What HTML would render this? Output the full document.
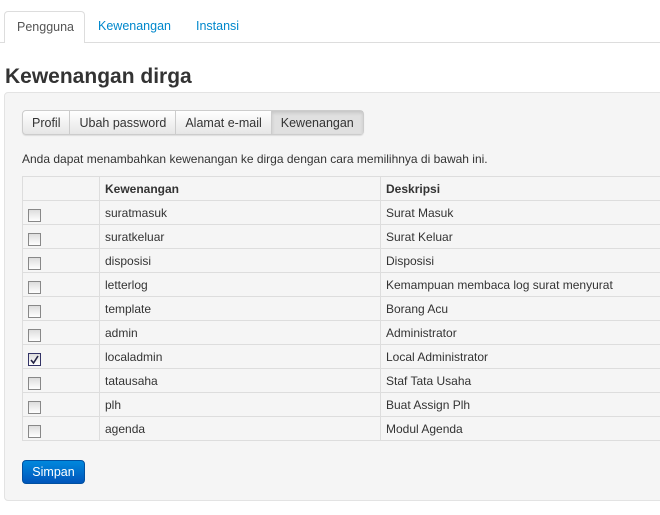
<!DOCTYPE html>
<html><head><meta charset="utf-8"><style>
*{box-sizing:border-box}
body{margin:0;width:660px;height:515px;overflow:hidden;background:#fff;font-family:"Liberation Sans",Arial,sans-serif;font-size:12px;color:#333}
.nav{position:absolute;left:0;top:0;width:660px;height:43px;border-bottom:1px solid #ddd}
.nav a{position:absolute;top:19px;color:#0088cc;font-size:12.5px}
.nav .act{position:absolute;left:4px;top:11px;width:81px;height:32px;border:1px solid #ddd;border-bottom:none;border-radius:4px 4px 0 0;background:#fff;color:#555;font-size:12.5px;padding:8px 0 0 12px}
h1{position:absolute;left:5px;top:65px;margin:0;font-size:21px;font-weight:bold;color:#333}
.well{position:absolute;left:4px;top:92px;width:670px;height:409px;background:#f5f5f5;border:1px solid #e3e3e3;border-radius:4px}
.bg{position:absolute;left:22px;top:110px;height:25px;display:flex;border:1px solid #ccc;border-radius:4px;background:linear-gradient(#fff,#e6e6e6);box-shadow:0 1px 1px rgba(0,0,0,.1)}
.bg div{padding:5px 9px 0;font-size:12.5px;border-right:1px solid #ccc;color:#333}
.bg div:last-child{border-right:none;background:#e0e0e0;box-shadow:inset 0 2px 3px rgba(0,0,0,.12)}
.info{position:absolute;left:22px;top:152px;font-size:12px}
table{position:absolute;left:22px;top:176px;border-collapse:collapse;width:660px}
td,th{border:1px solid #ddd;height:24px;padding:0 5px;text-align:left;font-size:12px}
th{font-weight:bold}
td:first-child,th:first-child{width:77px}
td:nth-child(2),th:nth-child(2){width:281px}
.cb{display:inline-block;width:13px;height:13px;border:1px solid #888;background:linear-gradient(#ddd,#fff);margin-top:5px;vertical-align:top;position:relative}
.btn{position:absolute;left:22px;top:460px;width:63px;height:24px;border-radius:4px;background:linear-gradient(#0088dd,#0055bb);border:1px solid #0050a0;color:#fff;font-size:12.5px;text-align:center;padding-top:4px}
</style></head><body>
<div class="nav"><div class="act">Pengguna</div><a style="left:98px">Kewenangan</a><a style="left:196px">Instansi</a></div>
<h1>Kewenangan dirga</h1>
<div class="well"></div>
<div class="bg"><div>Profil</div><div>Ubah password</div><div>Alamat e-mail</div><div>Kewenangan</div></div>
<div class="info">Anda dapat menambahkan kewenangan ke dirga dengan cara memilihnya di bawah ini.</div>
<table>
<tr><th></th><th>Kewenangan</th><th>Deskripsi</th></tr>
<tr><td><span class="cb"></span></td><td>suratmasuk</td><td>Surat Masuk</td></tr>
<tr><td><span class="cb"></span></td><td>suratkeluar</td><td>Surat Keluar</td></tr>
<tr><td><span class="cb"></span></td><td>disposisi</td><td>Disposisi</td></tr>
<tr><td><span class="cb"></span></td><td>letterlog</td><td>Kemampuan membaca log surat menyurat</td></tr>
<tr><td><span class="cb"></span></td><td>template</td><td>Borang Acu</td></tr>
<tr><td><span class="cb"></span></td><td>admin</td><td>Administrator</td></tr>
<tr><td><span class="cb" style="border-color:#336"><svg width="11" height="11" style="position:absolute;left:0;top:0"><path d="M2 6 L4.5 9 L9 2" stroke="#224" stroke-width="1.6" fill="none"/></svg></span></td><td>localadmin</td><td>Local Administrator</td></tr>
<tr><td><span class="cb"></span></td><td>tatausaha</td><td>Staf Tata Usaha</td></tr>
<tr><td><span class="cb"></span></td><td>plh</td><td>Buat Assign Plh</td></tr>
<tr><td><span class="cb"></span></td><td>agenda</td><td>Modul Agenda</td></tr>
</table>
<div class="btn">Simpan</div>
</body></html>
